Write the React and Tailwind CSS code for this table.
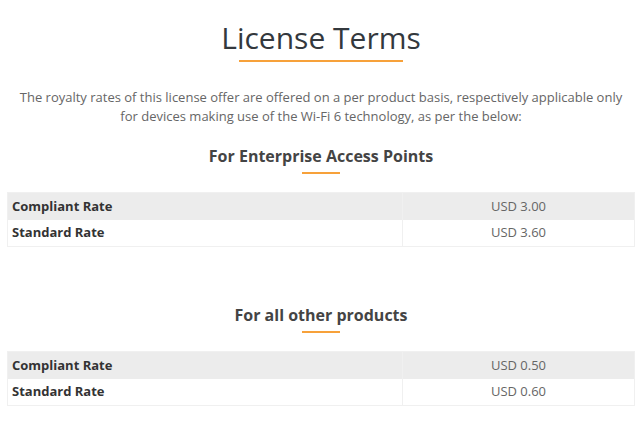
const tables = [
  {
    title: "For Enterprise Access Points",
    rows: [
      { label: "Compliant Rate", value: "USD 3.00" },
      { label: "Standard Rate", value: "USD 3.60" },
    ],
  },
  {
    title: "For all other products",
    rows: [
      { label: "Compliant Rate", value: "USD 0.50" },
      { label: "Standard Rate", value: "USD 0.60" },
    ],
  },
];

function RateTable({ title, rows, className }) {
  return (
    <div className={className}>
      <h3 className="text-center text-[16px] font-bold text-[#444] leading-[20px]">{title}</h3>
      <div className="mx-auto mt-[6px] h-[2px] w-[38px] bg-[#f7a13a]" />
      <table className="mt-[18px] w-full border-collapse border border-[#f0f0f0] text-[13px]">
        <tbody>
          {rows.map((r, i) => (
            <tr key={r.label} className={i % 2 === 0 ? "bg-[#ececec]" : "bg-white"}>
              <td className="h-[27px] w-[395px] border-r border-[#f0f0f0] px-[4px] font-bold text-[#333]">
                {r.label}
              </td>
              <td className="h-[27px] text-center text-[#666]">{r.value}</td>
            </tr>
          ))}
        </tbody>
      </table>
    </div>
  );
}

export default function App() {
  return (
    <div className="min-h-[427px] bg-white px-[7px] pt-[18px] font-['Open_Sans',sans-serif]">
      <h1 className="text-center text-[30px] leading-[40px] text-[#33383d]">License Terms</h1>
      <div className="mx-auto mt-[2px] h-[2px] w-[164px] bg-[#f7a13a]" />
      <p className="mt-[26px] text-center text-[13px] leading-[19px] text-[#666]">
        The royalty rates of this license offer are offered on a per product basis, respectively applicable only
        <br />
        for devices making use of the Wi-Fi 6 technology, as per the below:
      </p>
      <RateTable className="mt-[20px]" {...tables[0]} />
      <RateTable className="mt-[58px]" {...tables[1]} />
    </div>
  );
}
